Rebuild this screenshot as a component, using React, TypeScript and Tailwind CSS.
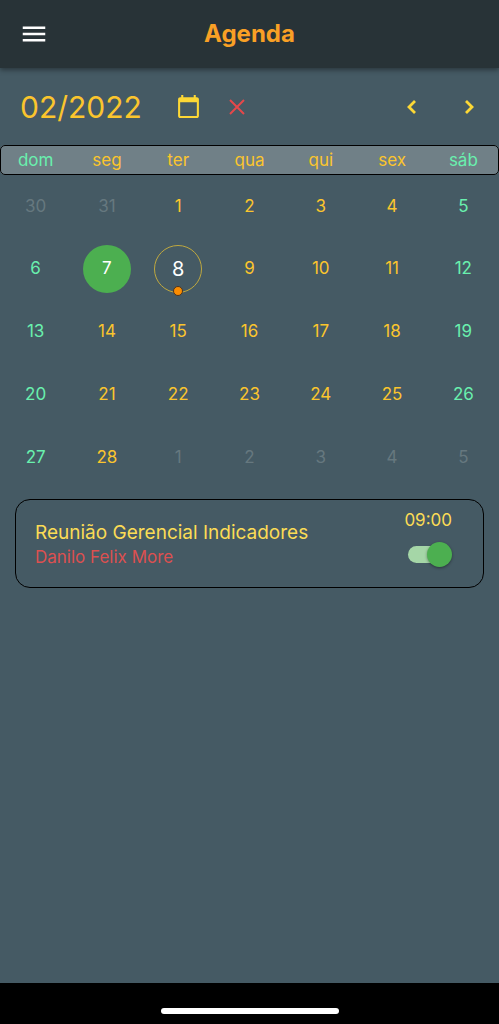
import { useState } from 'react';
import clsx from 'clsx';

const weekdays = ['dom', 'seg', 'ter', 'qua', 'qui', 'sex', 'sáb'];

// February 2022 starts on a Tuesday, so the grid opens with two days of January
const days = Array.from({ length: 35 }, (_, index) => {
	const offset = index - 1;
	if (offset < 1) return { label: offset + 31, outside: true };
	if (offset > 28) return { label: offset - 28, outside: true };
	return { label: offset, outside: false };
});

const today = 8;
const eventDays = [8];

function isWeekend(index: number) {
	return index % 7 === 0 || index % 7 === 6;
}

export default function App() {
	return (
		<div className="flex min-h-screen w-full flex-col bg-[#455a64] font-['Inter',sans-serif]">
			<Header />
			<main className="flex-1">
				<MonthToolbar />
				<Calendar />
				<EventCard
					title="Reunião Gerencial Indicadores"
					owner="Danilo Felix More"
					time="09:00"
				/>
			</main>
			<footer className="flex h-[41px] justify-center bg-black pt-[25px]">
				<div className="h-[6px] w-[178px] rounded-full bg-white" />
			</footer>
		</div>
	);
}

function Header() {
	return (
		<header className="grid h-[68px] grid-cols-[1fr_auto_1fr] items-center bg-[#283337] px-[19px] shadow-[0_2px_5px_rgba(0,0,0,0.4)]">
			<button type="button" aria-label="Menu" className="w-fit text-white">
				<svg viewBox="0 0 24 24" className="size-[30px]" fill="currentColor">
					<path d="M3 18h18v-2H3v2zm0-5h18v-2H3v2zm0-7v2h18V6H3z" />
				</svg>
			</button>
			<h1 className="text-[24px] leading-[30px] font-bold text-[#f9a025]">
				Agenda
			</h1>
		</header>
	);
}

function MonthToolbar() {
	return (
		<div className="flex h-[77px] items-center px-5 text-[#fdd835]">
			<h2 className="text-[30px] leading-[40px] text-[#fbc52d]">02/2022</h2>
			<button type="button" aria-label="Hoje" className="ml-[34px]">
				<svg viewBox="0 0 24 24" className="size-[25px]" fill="currentColor">
					<path d="M20 3h-1V1h-2v2H7V1H5v2H4c-1.1 0-2 .9-2 2v16c0 1.1.9 2 2 2h16c1.1 0 2-.9 2-2V5c0-1.1-.9-2-2-2zm0 18H4V8h16v13z" />
				</svg>
			</button>
			<button type="button" aria-label="Limpar" className="ml-6 text-[#e5484a]">
				<svg
					viewBox="0 0 24 24"
					className="size-6"
					fill="none"
					stroke="currentColor"
					strokeWidth="2"
				>
					<path d="M5 5l14 14M19 5L5 19" />
				</svg>
			</button>
			<div className="-mr-1 ml-auto flex gap-[30px]">
				<button type="button" aria-label="Mês anterior">
					<svg
						viewBox="0 0 28 28"
						className="size-7"
						fill="none"
						stroke="currentColor"
						strokeWidth="2.8"
					>
						<path d="M18 8l-6 6 6 6" />
					</svg>
				</button>
				<button type="button" aria-label="Próximo mês">
					<svg
						viewBox="0 0 28 28"
						className="size-7"
						fill="none"
						stroke="currentColor"
						strokeWidth="2.8"
					>
						<path d="M11 8l6 6-6 6" />
					</svg>
				</button>
			</div>
		</div>
	);
}

function Calendar() {
	const [selected, setSelected] = useState(7);

	return (
		<section aria-label="Calendário">
			<div className="grid h-[30px] grid-cols-7 items-center rounded-[5px] bg-[#708087] text-center text-[17px] leading-[24px] outline-1 -outline-offset-1 outline-black">
				{weekdays.map((weekday, index) => (
					<span
						key={weekday}
						className={isWeekend(index) ? 'text-[#69f0ae]' : 'text-[#fbc52d]'}
					>
						{weekday}
					</span>
				))}
			</div>
			<div className="grid h-[314px] auto-rows-fr grid-cols-7 place-items-center">
				{days.map(({ label, outside }, index) => {
					const isSelected = !outside && label === selected;
					const isToday = !outside && label === today;

					return (
						<button
							key={index}
							type="button"
							disabled={outside}
							onClick={() => setSelected(label)}
							className={clsx(
								'relative size-12 rounded-full',
								isToday ? 'text-[20px]' : 'text-[17px]',
								isSelected && 'bg-[#4caf50]',
								isToday && 'border border-[#bfa83f]',
								outside
									? 'text-[#66787f]'
									: isSelected || isToday
										? 'text-white'
										: isWeekend(index)
											? 'text-[#69f0ae]'
											: 'text-[#fbc52d]'
							)}
						>
							{label}
							{!outside && eventDays.includes(label) && (
								<span className="absolute -bottom-1 left-1/2 size-[10px] -translate-x-1/2 rounded-full border border-[#4a3420] bg-[#fb8c00]" />
							)}
						</button>
					);
				})}
			</div>
		</section>
	);
}

function EventCard({
	title,
	owner,
	time
}: {
	title: string;
	owner: string;
	time: string;
}) {
	return (
		<article className="mx-[15px] mt-[10px] flex h-[89px] items-center justify-between rounded-[15px] border border-black pr-[31px] pl-[19px]">
			<div className="pt-px">
				<h3 className="text-[19px] leading-[25px] text-[#fbdc55]">{title}</h3>
				<p className="text-[17px] leading-[24px] text-[#dd5050]">{owner}</p>
			</div>
			<div className="flex flex-col items-end gap-[10px] self-start pt-2">
				<time className="text-[17px] leading-[24px] text-[#fbdc55]">{time}</time>
				<label className="relative flex h-[25px] w-11 items-center">
					<input
						type="checkbox"
						role="switch"
						defaultChecked
						aria-label={title}
						className="peer h-[17px] w-[42px] appearance-none rounded-full bg-gray-400 checked:bg-[#a5d6a7]"
					/>
					<span className="pointer-events-none absolute left-0 size-[25px] rounded-full bg-gray-200 shadow-[0_1px_3px_rgba(0,0,0,0.4)] peer-checked:left-auto peer-checked:right-0 peer-checked:bg-[#4caf50]" />
				</label>
			</div>
		</article>
	);
}
